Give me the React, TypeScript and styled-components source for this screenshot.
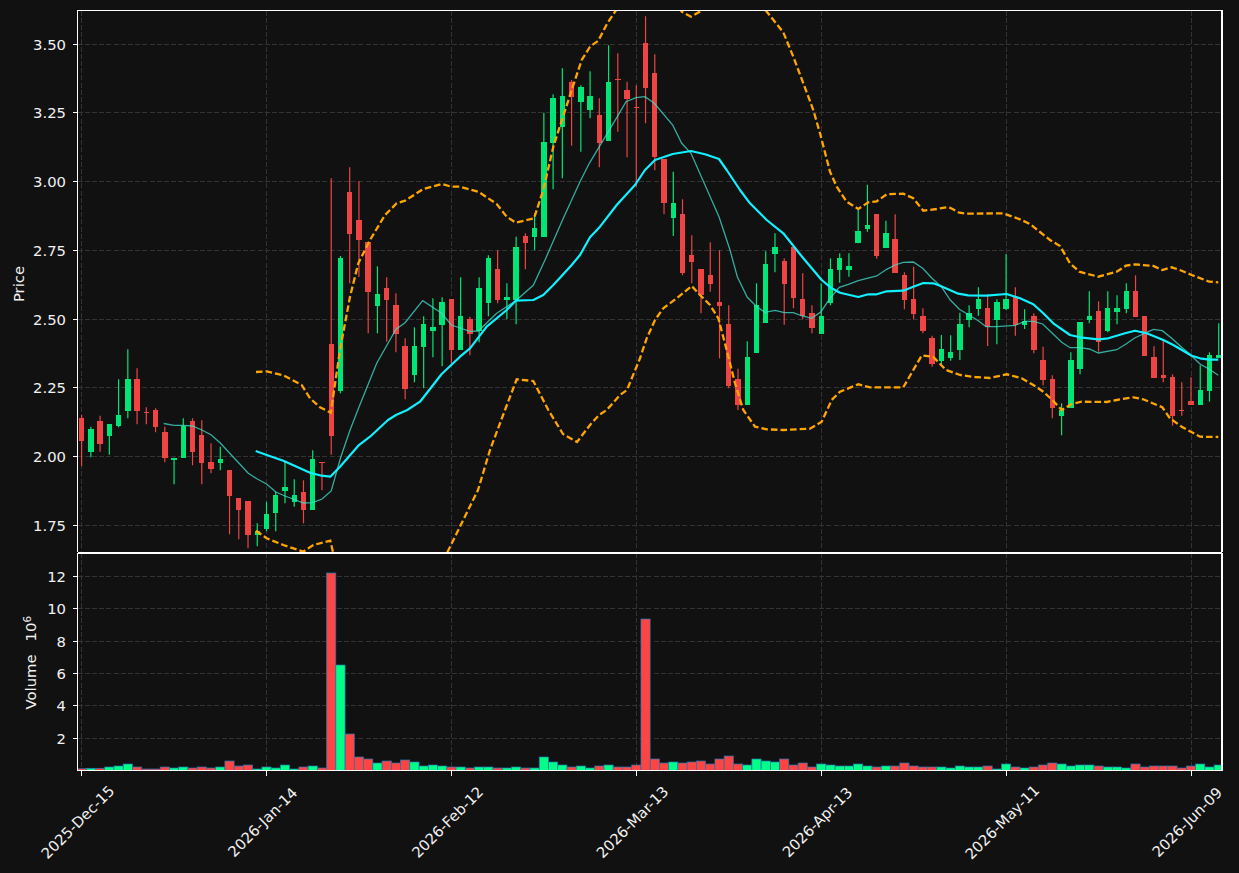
import styled, { createGlobalStyle } from "styled-components";

const GlobalStyle = createGlobalStyle`
  html, body {
    margin: 0;
    background: #111111;
  }
`;

const Figure = styled.div`
  display: flex;
  flex-direction: column;
  width: 1239px;
  height: 873px;
  padding-top: 10px;
  box-sizing: border-box;
  overflow: hidden;
  background: #111111;
`;

const Panel = styled.svg`
  display: block;
  flex: none;
  width: 1239px;
  font-family: "DejaVu Sans", sans-serif;
`;

const GridLine = styled.line`
  stroke: #333333;
  stroke-width: 1;
  stroke-dasharray: 5 2.2;
  shape-rendering: crispEdges;
`;

const Spine = styled.line`
  stroke: #ffffff;
  stroke-width: 1.2;
  shape-rendering: crispEdges;
`;

const TickMark = styled.line`
  stroke: #ffffff;
  stroke-width: 1;
  shape-rendering: crispEdges;
`;

const TickLabel = styled.text`
  fill: #f2f2f2;
  font-size: 14.8px;
`;

const AxisTitle = styled.text`
  fill: #f2f2f2;
  font-size: 14.8px;
`;

const Wick = styled.line<{ $up: boolean }>`
  stroke: ${(p) => (p.$up ? "#00e676" : "#ef4444")};
  stroke-width: 1.2;
`;

const Body = styled.rect<{ $up: boolean }>`
  fill: ${(p) => (p.$up ? "#00e676" : "#ef4444")};
  shape-rendering: crispEdges;
`;

const VolumeBar = styled.rect<{ $up: boolean }>`
  fill: ${(p) => (p.$up ? "#00ff88" : "#ff4444")};
  stroke: #1f77b4;
  stroke-width: 0.7;
`;

const TealLine = styled.polyline`
  fill: none;
  stroke: #40e0d0;
  stroke-width: 1.3;
  opacity: 0.75;
`;

const CyanLine = styled.polyline`
  fill: none;
  stroke: #10f0ff;
  stroke-width: 2.2;
  stroke-linejoin: round;
`;

const BandLine = styled.polyline`
  fill: none;
  stroke: #ffa500;
  stroke-width: 2.3;
  stroke-dasharray: 6.6 3;
`;

// wick top, body top, body bottom, wick bottom (page px), 1 = up, volume bar px
type Candle = [number, number, number, number, number, number];

const candles: Candle[] = [
  [415, 418, 441, 466, 0, 1.3], [426.7, 429.3, 451.7, 457.3, 1, 1.7], [415.7, 421.3, 443.7, 451.7, 0, 1.7], [424, 424, 435.7, 454.7, 1, 3],
  [379.3, 415.3, 426.3, 427.3, 1, 4], [349.3, 379.3, 410.7, 418.3, 1, 6], [368.3, 379.3, 410.7, 424.3, 0, 3], [407.3, 411.7, 412.7, 424.3, 0, 1],
  [408.3, 410.3, 426.7, 432.3, 0, 1], [426.7, 432.3, 457.7, 462.3, 0, 3], [457.7, 458, 460, 484.3, 1, 2], [418.3, 425.7, 457.7, 457.7, 1, 3],
  [418.3, 421.3, 451.7, 465.3, 0, 2], [420.3, 435.3, 462.7, 484.3, 0, 3], [443.3, 462.3, 468.7, 473.3, 0, 2], [446.7, 459.3, 462.7, 470.3, 1, 3],
  [470, 470.3, 495.7, 534.3, 0, 9], [498.3, 498.3, 509.7, 539.3, 0, 4], [501.3, 501.3, 534.7, 548.3, 0, 5], [523.3, 531.3, 534.7, 546.3, 1, 1],
  [501.7, 514.3, 528.7, 531.3, 1, 3], [491.7, 495.3, 512.7, 531.3, 1, 2], [461.3, 487.3, 490.7, 503.3, 1, 5], [479.3, 495.3, 501.7, 506.7, 1, 1],
  [480.3, 492.3, 509.7, 523.3, 0, 3], [450.3, 459.3, 509.7, 509.7, 1, 4], [462.3, 462, 463, 490.3, 0, 2], [178.3, 344, 435.7, 454.7, 0, 197],
  [256, 258.3, 390.7, 393.3, 1, 105], [167.3, 192, 233.7, 283.3, 0, 36], [181.3, 220, 239.7, 277, 0, 13], [241.7, 242.3, 291.7, 333.3, 0, 11],
  [266.3, 294.3, 306, 333.3, 1, 7], [277.3, 288.3, 299.7, 341.7, 0, 9], [293.3, 305.3, 333.7, 352.3, 0, 7], [338.3, 346, 388.7, 399.3, 0, 10],
  [327.3, 346.3, 374.7, 382.3, 1, 8], [316.3, 324.3, 346.7, 388.3, 1, 4], [298.3, 327.3, 330.7, 357.3, 1, 5], [297.3, 302.3, 324.7, 366.3, 1, 4],
  [299.3, 299.3, 349.7, 363.3, 0, 3], [277.3, 316.3, 349.7, 350, 1, 3], [316.7, 319.3, 333.7, 355.3, 0, 2], [277.3, 288.3, 330.7, 342.3, 1, 3],
  [255.3, 258.3, 302.7, 316.3, 1, 3], [250.3, 269.3, 299.7, 303.3, 0, 2], [283.3, 297.3, 299.7, 319.3, 1, 2], [236.7, 247.3, 299.7, 324.3, 1, 3],
  [233.3, 236.3, 242.7, 269.3, 0, 2], [213.3, 228.3, 236.7, 250, 1, 2], [112.7, 142.3, 236.7, 236.7, 1, 13], [94.3, 98, 142.7, 189.3, 1, 8],
  [68.3, 96.3, 126.7, 178.3, 1, 5], [80, 82.3, 96.7, 145.7, 0, 3], [85.3, 87.3, 101.7, 151.7, 1, 4], [71.3, 96.3, 110, 118.3, 1, 2],
  [98.3, 115.3, 142.7, 167.3, 0, 4], [45.3, 82.3, 140.7, 140.7, 1, 5], [53.3, 79, 80, 131.7, 0, 3], [81.7, 90.3, 99, 157.3, 0, 3],
  [85.3, 107, 108, 186.7, 0, 5], [16.3, 43.3, 87.7, 123.3, 0, 151], [54.3, 73.3, 156.7, 170.3, 0, 11], [159, 159, 203.3, 214.3, 0, 7],
  [171.7, 203.3, 217.7, 236, 1, 8], [199.3, 214.3, 272.7, 275.3, 0, 7], [235.3, 255, 261.7, 283.3, 0, 8], [269, 269.3, 295, 313.3, 0, 9],
  [242.3, 275.3, 284, 291.7, 0, 6], [250.3, 302.3, 305.7, 358.3, 0, 11], [305.3, 324.3, 386, 388.3, 0, 14], [368.7, 379.3, 405, 410, 0, 6],
  [341.3, 357.3, 405, 405, 1, 5], [283.3, 305.3, 352.7, 352.7, 1, 11], [251.3, 264.3, 322.7, 322.7, 1, 9], [233.3, 247.3, 253.7, 272.3, 1, 8],
  [258.3, 261.3, 283.7, 324.7, 0, 11], [247.3, 247.3, 297.7, 308.3, 0, 5], [273.3, 299.3, 316.3, 319.3, 0, 7], [305.3, 313.3, 327.7, 333.3, 0, 3],
  [283.3, 316.3, 333.7, 333.7, 1, 6], [258.3, 269.3, 302.7, 305.3, 1, 5], [253.3, 258.3, 270, 282.7, 1, 4], [253.3, 266.3, 270, 276.7, 1, 4],
  [209, 231.3, 242.7, 243.3, 1, 6], [184.7, 225.3, 229, 231.7, 1, 4], [214.3, 214.3, 256, 258.7, 0, 3], [220.7, 233.3, 248, 248, 1, 4],
  [214.3, 239.3, 272.7, 272.7, 0, 4], [272.3, 275.3, 299.7, 309.3, 0, 7], [266.7, 299.3, 313.7, 319.3, 0, 4], [308.3, 316.3, 331, 333.3, 0, 3],
  [335.7, 338.3, 363.7, 366.7, 0, 3], [335, 349.3, 360.7, 365, 1, 3], [335.3, 352.3, 357.7, 360.7, 1, 2], [312.7, 324.3, 349.7, 360, 1, 4],
  [305.3, 313.3, 319.7, 327.3, 1, 3], [287.3, 299.3, 308.7, 315.7, 1, 3], [294.3, 308.3, 326.7, 346, 0, 4], [299.3, 302.3, 319.7, 344.3, 1, 1],
  [254, 299.3, 309, 310, 1, 6], [287.3, 296.7, 324.7, 335.7, 0, 3], [309.3, 321.3, 324.7, 329, 1, 2], [313.3, 316, 350, 353.3, 0, 3],
  [346.7, 360.3, 379.7, 385.3, 0, 5], [375.3, 379.3, 407.7, 418.3, 0, 7], [403.3, 410.3, 415.7, 435.3, 1, 6], [352.3, 360.3, 407.7, 407.7, 1, 4],
  [322.3, 322.3, 368.7, 374.3, 1, 5], [291.3, 316, 319.7, 323.3, 1, 5], [301.3, 311, 341.7, 351.7, 0, 4], [291.3, 308.3, 330.7, 332.3, 1, 3],
  [295.3, 308.3, 311.7, 324.3, 1, 3], [283.3, 291.3, 309, 313.3, 1, 2], [275.3, 291.3, 316.7, 316.7, 0, 6], [316, 316, 355.7, 355.7, 0, 3],
  [346.3, 357.3, 377.7, 377.7, 0, 4], [340, 375.3, 378, 382.3, 0, 4], [374.3, 377.3, 415.7, 425.7, 0, 4], [382.3, 410, 411, 415.7, 0, 2],
  [377.3, 401.3, 405, 405, 0, 4], [365.3, 390.3, 405, 405, 1, 6], [352.3, 355.3, 391, 401.7, 1, 3], [323.3, 355.3, 357.7, 357.7, 1, 5],
];

const teal = "163.7,423.5 174,425.3 183,425.3 192.5,426 201.8,430 211,434.7 220.3,443 229.5,453 238.8,463 248,473 257.3,479 266.5,484 275.8,492 285,496 294.2,499.5 303.5,503 312.7,502.7 322,499 331.2,491 340.5,458 349.7,431 359,407 376.7,363.3 396,329.3 405,322.7 422.7,300.7 441.7,313.3 451.3,325 470,331.3 478.3,331 496.7,313.3 515.7,300.7 533.3,285.3 545,260 563.3,218.3 580,181.7 589.3,163.3 607.3,133.3 617.3,116.7 626,101.7 636,97.7 645,96.7 654.3,103.3 672.7,125 681.7,143.3 691,153.3 719,216.7 730,250 737.3,276.7 747.3,297.3 756.7,306.7 765,312.3 775,310.3 784.3,312.7 793.3,312.7 802.3,316 811.7,318.3 821,311.7 830,298.3 839.3,287.3 848.3,284.3 858.3,280.7 876.7,276 886.7,269.3 895,265 903.3,262.3 913.3,262 922.7,268.3 932,278.3 941.3,286.7 950.3,300 959.3,309.3 969,315 978.3,320.7 986,326.7 996.7,326.7 1015,325.3 1025,321.3 1033.3,321.3 1042.7,324 1052.3,333.3 1061.7,342.3 1070,347.7 1080,347.7 1089.3,349 1098.3,353 1116.7,349.7 1126,344 1135,337.7 1153.3,329.3 1162.3,330.7 1171.7,338.3 1181.7,347.3 1190.7,355 1200,364 1209.3,369.3 1218.3,375.3";

const cyan = "255.7,451 266.7,455 283.3,460.7 296.7,466.7 310,472.7 321.7,475.7 330.3,476.7 340,466.7 358.3,445.7 370,436.7 388,420 396,415 407.3,410 420,401.7 441.7,374 460,356.7 470,348.3 486.7,326.7 506.7,310 515.7,300.7 533.3,300 543.3,295 553.3,285 571.7,265 580,255 590,237.3 600,226.7 616.7,205 635,185 645,170 655,160 672.7,154 691,151 705,154.3 719,159 726.7,170 740,190 750,203.3 766.7,220 783.3,233.3 803.3,258.3 821.7,280 831.7,288.3 840,292.7 858.3,297 868.3,294.3 876.7,294.3 886.7,291.3 903.3,290.7 913.3,286.7 923.3,283 933.3,283.3 940,285.7 958.3,293.7 968.3,295.3 986.7,295.7 1006.5,294 1020,298.3 1033.3,304.3 1043.3,313.3 1053.3,323.3 1070,335 1080,337.3 1098.3,339.3 1108.3,338.3 1125,333.3 1135,330.7 1146.7,333.3 1163.3,340 1173.3,345 1191.7,355.7 1200,358.3 1209.3,359.7 1218.3,359.7";

const upperBand = "256,372 266.7,371.3 283.3,375.3 301.7,385 310,398.3 320,407.3 330.8,412.7 340,350 350,296.7 358.3,263.3 370,240 385,215 396.7,203.3 405,200.7 423.3,189 441.7,184 451.3,186.7 460,186.7 478.3,191.7 496.7,204 506.7,216.7 515.7,222.7 534,218.3 543.3,190 553.3,146.7 571.7,90 581.7,60 590,46.7 598.3,40.7 607.3,23.3 616.7,9.3 640,-30 665,-10 681.7,11.7 691,16.7 701.7,10.7 730,-12 766,10.7 783.3,32.3 793.3,56.7 803.3,83.3 813.3,110 820,133.3 830,171.7 836.7,186.7 846.7,201.7 858.3,209 868.3,202.3 876.7,201.3 886.7,194.3 903.3,193.7 913.3,198.3 923.3,210.7 936.7,209 946.7,207.3 950.7,208 959.3,212.7 966.7,213.7 1003.3,213.3 1020,219.3 1030,224 1040,232 1050,240 1060,246 1070,263.3 1079.3,271.7 1098.3,276.7 1116.7,271.7 1126,265.7 1135,264.3 1153.3,266 1162.3,270 1171.7,267.3 1181.7,270.7 1191.7,275 1209.3,281.7 1218.3,282.3";

const lowerBand = "256,530.7 266.7,538.3 283.3,545 303.3,551.7 313.3,545 330.3,540.7 333.3,553.3 345,600 430,600 447,553 478,490 490,450 505,410 516.7,379.3 533.3,381 548.3,410 563,434 577,442 590,425 599,415 606.7,410 620,395 627,390 640,358.3 646.7,338.3 655,320 663.3,308.3 676.7,298.3 691.7,286 700,295 710,305 718.3,318.3 726.7,350 735,383.3 743.3,410 755,426.7 766.7,429.3 783,430 810,428.7 821.7,421.7 831.7,400 840,391.7 858.3,384.3 870,387.3 903.3,387.3 921.7,355.5 933,356.7 946,370 960,375 975,377 990,378 1006.7,374.3 1021.7,378.3 1033.3,385 1043.3,391.7 1052.3,400 1061.7,410 1071.7,404 1081.7,401.7 1106.7,402 1116.7,400 1133.3,397.3 1143.3,399.3 1162.3,407.3 1170,418.3 1181.7,426.7 1200,436.7 1218.3,437";

const PLOT_LEFT = 77.5;
const PLOT_RIGHT = 1222;
const VOLUME_BASE = 770.5;
const candleX = (i: number) => 81.6 + 9.245 * i;

const priceTicks: [string, number][] = [
  ["3.50", 44], ["3.25", 112.8], ["3.00", 181.5], ["2.75", 250.3],
  ["2.50", 319], ["2.25", 387.8], ["2.00", 456.6], ["1.75", 525.3],
];

const volumeTicks: [string, number][] = [
  ["12", 576.3], ["10", 608.7], ["8", 641.1], ["6", 673.5], ["4", 705.9], ["2", 738.2],
];

const dateTicks: [string, number][] = [
  ["2025-Dec-15", 81.6], ["2026-Jan-14", 266.5], ["2026-Feb-12", 451.4], ["2026-Mar-13", 636.3],
  ["2026-Apr-13", 821.2], ["2026-May-11", 1006.1], ["2026-Jun-09", 1191],
];

function VerticalGrid({ top, bottom }: { top: number; bottom: number }) {
  return (
    <>
      {dateTicks.map(([label, x]) => (
        <GridLine key={label} x1={x} x2={x} y1={top} y2={bottom} />
      ))}
    </>
  );
}

function PriceChart() {
  return (
    <Panel height={542} viewBox="0 10 1239 542">
      <defs>
        <clipPath id="price-clip">
          <rect x={PLOT_LEFT} y={10.5} width={PLOT_RIGHT - PLOT_LEFT} height={542} />
        </clipPath>
      </defs>
      <AxisTitle x={23.5} y={284} textAnchor="middle" transform="rotate(-90 23.5 284)">
        Price
      </AxisTitle>
      {priceTicks.map(([label, y]) => (
        <g key={label}>
          <GridLine x1={PLOT_LEFT} x2={PLOT_RIGHT} y1={y} y2={y} />
          <TickMark x1={73} x2={PLOT_LEFT} y1={y} y2={y} />
          <TickLabel x={66} y={y + 5.5} textAnchor="end">
            {label}
          </TickLabel>
        </g>
      ))}
      <VerticalGrid top={10.5} bottom={552} />
      <g clipPath="url(#price-clip)">
        {candles.map(([wickTop, bodyTop, bodyBottom, wickBottom, up], i) => (
          <g key={i}>
            <Wick $up={!!up} x1={candleX(i)} x2={candleX(i)} y1={wickTop} y2={wickBottom} />
            <Body $up={!!up} x={candleX(i) - 2.7} y={bodyTop} width={5.4} height={Math.max(bodyBottom - bodyTop, 1)} />
          </g>
        ))}
        <TealLine points={teal} />
        <CyanLine points={cyan} />
        <BandLine points={upperBand} />
        <BandLine points={lowerBand} />
      </g>
      <Spine x1={PLOT_LEFT} x2={PLOT_LEFT} y1={10} y2={552} />
      <Spine x1={PLOT_RIGHT} x2={PLOT_RIGHT} y1={10} y2={552} />
      <Spine x1={PLOT_LEFT} x2={PLOT_RIGHT} y1={10.5} y2={10.5} />
    </Panel>
  );
}

function VolumeChart() {
  return (
    <Panel height={321} viewBox="0 552 1239 321">
      <defs>
        <clipPath id="volume-clip">
          <rect x={PLOT_LEFT} y={553} width={PLOT_RIGHT - PLOT_LEFT} height={VOLUME_BASE - 553} />
        </clipPath>
      </defs>
      <AxisTitle x={36} y={709.5} transform="rotate(-90 36 709.5)">
        Volume
        <tspan dx="13">10</tspan>
        <tspan dy="-5.5" fontSize="10.4">6</tspan>
      </AxisTitle>
      {volumeTicks.map(([label, y]) => (
        <g key={label}>
          <GridLine x1={PLOT_LEFT} x2={PLOT_RIGHT} y1={y} y2={y} />
          <TickMark x1={73} x2={PLOT_LEFT} y1={y} y2={y} />
          <TickLabel x={66} y={y + 5.5} textAnchor="end">
            {label}
          </TickLabel>
        </g>
      ))}
      <VerticalGrid top={553} bottom={VOLUME_BASE} />
      <g clipPath="url(#volume-clip)">
        {candles.map(([, , , , up, volume], i) => (
          <VolumeBar key={i} $up={!!up} x={candleX(i) - 4.6} y={VOLUME_BASE - volume - 0.5} width={9.2} height={volume + 2} />
        ))}
      </g>
      {dateTicks.map(([label, x]) => (
        <g key={label}>
          <TickMark x1={x} x2={x} y1={VOLUME_BASE} y2={775.5} />
          <TickLabel textAnchor="middle" dominantBaseline="middle" transform={`translate(${x - 3} 823) rotate(-45)`}>
            {label}
          </TickLabel>
        </g>
      ))}
      <Spine x1={PLOT_LEFT} x2={PLOT_LEFT} y1={553} y2={VOLUME_BASE} />
      <Spine x1={PLOT_RIGHT} x2={PLOT_RIGHT} y1={553} y2={VOLUME_BASE} />
      <Spine x1={PLOT_LEFT} x2={PLOT_RIGHT} y1={553} y2={553} />
      <Spine x1={PLOT_LEFT} x2={PLOT_RIGHT} y1={VOLUME_BASE} y2={VOLUME_BASE} />
    </Panel>
  );
}

export default function App() {
  return (
    <Figure>
      <GlobalStyle />
      <PriceChart />
      <VolumeChart />
    </Figure>
  );
}
